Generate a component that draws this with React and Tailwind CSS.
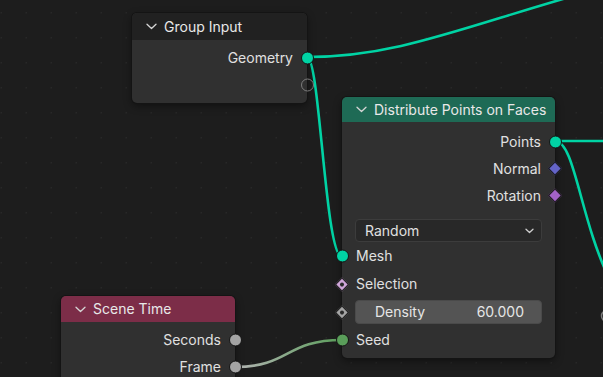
import React from "react";

function Chevron({ className = "" }) {
  return (
    <svg width="11" height="7" viewBox="0 0 11 7" className={className}>
      <path d="M1 1.2 L5.5 5.5 L10 1.2" fill="none" stroke="#d6d6d6" strokeWidth="1.3" strokeLinecap="round" strokeLinejoin="round" />
    </svg>
  );
}

function SmallChevron() {
  return (
    <svg width="9" height="6" viewBox="0 0 9 6">
      <path d="M1 1.2 L4.5 4.5 L8 1.2" fill="none" stroke="#cfcfcf" strokeWidth="1.3" strokeLinecap="round" strokeLinejoin="round" />
    </svg>
  );
}

function Socket({ side, kind, color }) {
  const pos = side === "right" ? "right-[-6.5px]" : "left-[-6.5px]";
  if (kind === "circle") {
    return (
      <span
        className={`absolute ${pos} top-1/2 -translate-y-1/2 w-[13px] h-[13px] rounded-full border border-[#141414]`}
        style={{ backgroundColor: color }}
      />
    );
  }
  if (kind === "empty") {
    return (
      <span className={`absolute ${pos} top-1/2 -translate-y-1/2 w-[13px] h-[13px] rounded-full border-[1.5px] border-[#7c7c7c] bg-transparent`} />
    );
  }
  return (
    <span className={`absolute ${pos} top-1/2 -translate-y-1/2 w-[13px] h-[13px] flex items-center justify-center`}>
      <span
        className="w-[10px] h-[10px] shrink-0 rotate-45 border border-[#161616] flex items-center justify-center"
        style={{ backgroundColor: color }}
      >
        {kind === "diamond-dot" && <span className="w-[3.5px] h-[3.5px] rounded-full bg-[#2a2a2a]" />}
      </span>
    </span>
  );
}

function OutRow({ label, kind = "circle", color, h = "h-[27px]" }) {
  return (
    <div className={`relative ${h} flex items-center justify-end pr-[14px] text-[14px] text-[#e0e0e0]`}>
      {label}
      <Socket side="right" kind={kind} color={color} />
    </div>
  );
}

function InRow({ label, kind = "circle", color, h = "h-[28px]" }) {
  return (
    <div className={`relative ${h} flex items-center pl-[14px] text-[14px] text-[#e0e0e0]`}>
      {label}
      <Socket side="left" kind={kind} color={color} />
    </div>
  );
}

function Header({ title, bg, h }) {
  return (
    <div className={`${h} ${bg} rounded-t-[5px] flex items-center pl-[14px] gap-[7px] text-[14px] text-[#e8e8e8]`}>
      <Chevron />
      <span>{title}</span>
    </div>
  );
}

export default function App() {
  const nodeShadow = "shadow-[0_0_0_1px_#141414,0_3px_8px_rgba(0,0,0,0.45)]";
  return (
    <div className="relative w-[603px] h-[377px] overflow-hidden bg-[#1d1d1d] font-['Inter','Noto_Sans',sans-serif] leading-none">
      <svg className="absolute inset-0" width="603" height="377">
        <defs>
          <pattern id="grid" x="0" y="0" width="25" height="25" patternUnits="userSpaceOnUse">
            <rect x="0.5" y="12" width="1.5" height="1.5" fill="#282828" />
          </pattern>
          <linearGradient id="seedGrad" x1="235" y1="0" x2="342" y2="0" gradientUnits="userSpaceOnUse">
            <stop offset="0" stopColor="#b4b4b4" />
            <stop offset="1" stopColor="#5a9e5a" />
          </linearGradient>
        </defs>
        <rect width="603" height="377" fill="url(#grid)" />
        <g fill="none" strokeWidth="2.6" strokeLinecap="round">
          <path d="M307 57 C 410 57, 480 18, 650 -25" stroke="#00d3a4" />
          <path d="M307 57 C 320 57, 325 257, 342 257" stroke="#00d3a4" />
          <path d="M555 141 L 610 141" stroke="#00d3a4" />
          <path d="M555 141 C 575 141, 580 220, 610 280" stroke="#00d3a4" />
          <path d="M235 367 C 290 367, 285 340, 342 340" stroke="url(#seedGrad)" />
        </g>
        <circle cx="607" cy="316" r="5.5" fill="none" stroke="#7c7c7c" strokeWidth="1.5" />
      </svg>

      {/* Group Input */}
      <div className={`absolute left-[132px] top-[13px] w-[175px] rounded-[5px] bg-[#303030] ${nodeShadow}`}>
        <Header title="Group Input" bg="bg-[#212121]" h="h-[27px]" />
        <div className="pt-[4px] pb-[5px] flex flex-col">
          <OutRow label="Geometry" color="#00d3a4" />
          <OutRow label="" kind="empty" />
        </div>
      </div>

      {/* Distribute Points on Faces */}
      <div className={`absolute left-[342px] top-[97px] w-[213px] rounded-[5px] bg-[#303030] ${nodeShadow}`}>
        <Header title="Distribute Points on Faces" bg="bg-[#1e6a55]" h="h-[25px]" />
        <div className="pt-[6px] pb-[2px] flex flex-col">
          <OutRow label="Points" color="#00d3a4" />
          <OutRow label="Normal" kind="diamond" color="#6464c8" />
          <OutRow label="Rotation" kind="diamond" color="#a362c8" />
          <div className="mt-[10px] mx-[13px] h-[23px] rounded-[4px] bg-[#282828] border border-[#3c3c3c] flex items-center justify-between pl-[9px] pr-[7px] text-[14px] text-[#e0e0e0]">
            <span>Random</span>
            <SmallChevron />
          </div>
          <InRow label="Mesh" color="#00d3a4" />
          <InRow label="Selection" kind="diamond-dot" color="#cfa6d9" />
          <div className="relative mt-[2px] h-[24px]">
            <Socket side="left" kind="diamond-dot" color="#a4a4a4" />
            <div className="mx-[13px] h-full rounded-[4px] bg-[#545454] border border-[#4a4a4a] flex items-center justify-between pl-[19px] pr-[17px] text-[14px] text-[#e6e6e6]">
              <span>Density</span>
              <span>60.000</span>
            </div>
          </div>
          <InRow label="Seed" color="#5a9e5a" h="h-[32px]" />
        </div>
      </div>

      {/* Scene Time */}
      <div className={`absolute left-[61px] top-[296px] w-[174px] rounded-[5px] bg-[#303030] ${nodeShadow}`}>
        <Header title="Scene Time" bg="bg-[#7c2d48]" h="h-[26px]" />
        <div className="pt-[4px] pb-[5px] flex flex-col">
          <OutRow label="Seconds" color="#a4a4a4" />
          <OutRow label="Frame" color="#a4a4a4" />
        </div>
      </div>
    </div>
  );
}
